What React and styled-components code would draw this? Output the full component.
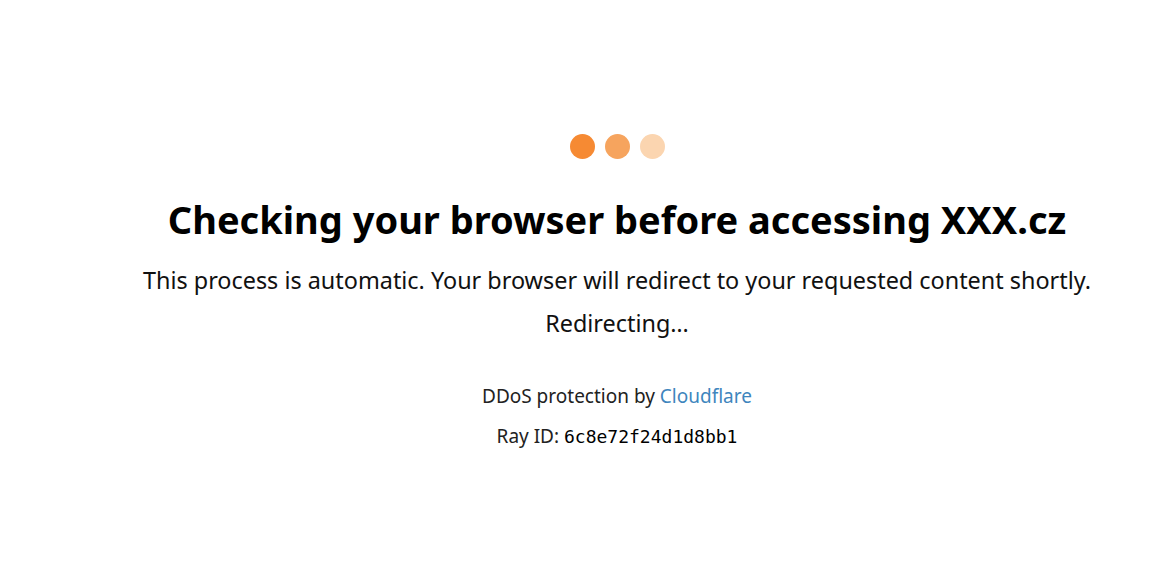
import React from "react";
import styled, { createGlobalStyle } from "styled-components";

const GlobalStyle = createGlobalStyle`
  html, body {
    margin: 0;
    padding: 0;
    background: #fff;
  }
  body {
    font-family: "Noto Sans", "Open Sans", sans-serif;
    color: #000;
  }
`;

const Page = styled.div`
  width: 100%;
  height: 567px;
  box-sizing: border-box;
  padding: 134px 0 0 72px;
  display: flex;
  flex-direction: column;
  align-items: center;
  text-align: center;
`;

const Dots = styled.div`
  display: flex;
  gap: 10px;
  margin-bottom: 36px;
`;

const Dot = styled.span`
  width: 25px;
  height: 25px;
  border-radius: 50%;
  background: ${(p) => p.$color};
`;

const Heading = styled.h1`
  margin: 0 0 16px;
  font-size: 38px;
  font-weight: 700;
  line-height: 48px;
`;

const Lead = styled.p`
  margin: 0;
  font-size: 23.4px;
  line-height: 43px;
  color: #111;
`;

const Footer = styled.div`
  margin-top: 31px;
  font-size: 19px;
  line-height: 40px;
  color: #222;
`;

const CfLink = styled.a`
  color: #3e85bd;
  text-decoration: none;
`;

const Ray = styled.code`
  font-family: "DejaVu Sans Mono", "Liberation Mono", monospace;
  font-size: 18px;
  color: #000;
`;

export default function App() {
  return (
    <>
      <GlobalStyle />
      <Page>
        <Dots>
          <Dot $color="#f68a33" />
          <Dot $color="#f6a45e" />
          <Dot $color="#fbd5b0" />
        </Dots>
        <Heading>Checking your browser before accessing XXX.cz</Heading>
        <Lead>This process is automatic. Your browser will redirect to your requested content shortly.</Lead>
        <Lead>Redirecting…</Lead>
        <Footer>
          <div>
            DDoS protection by <CfLink href="#">Cloudflare</CfLink>
          </div>
          <div>
            Ray ID: <Ray>6c8e72f24d1d8bb1</Ray>
          </div>
        </Footer>
      </Page>
    </>
  );
}
